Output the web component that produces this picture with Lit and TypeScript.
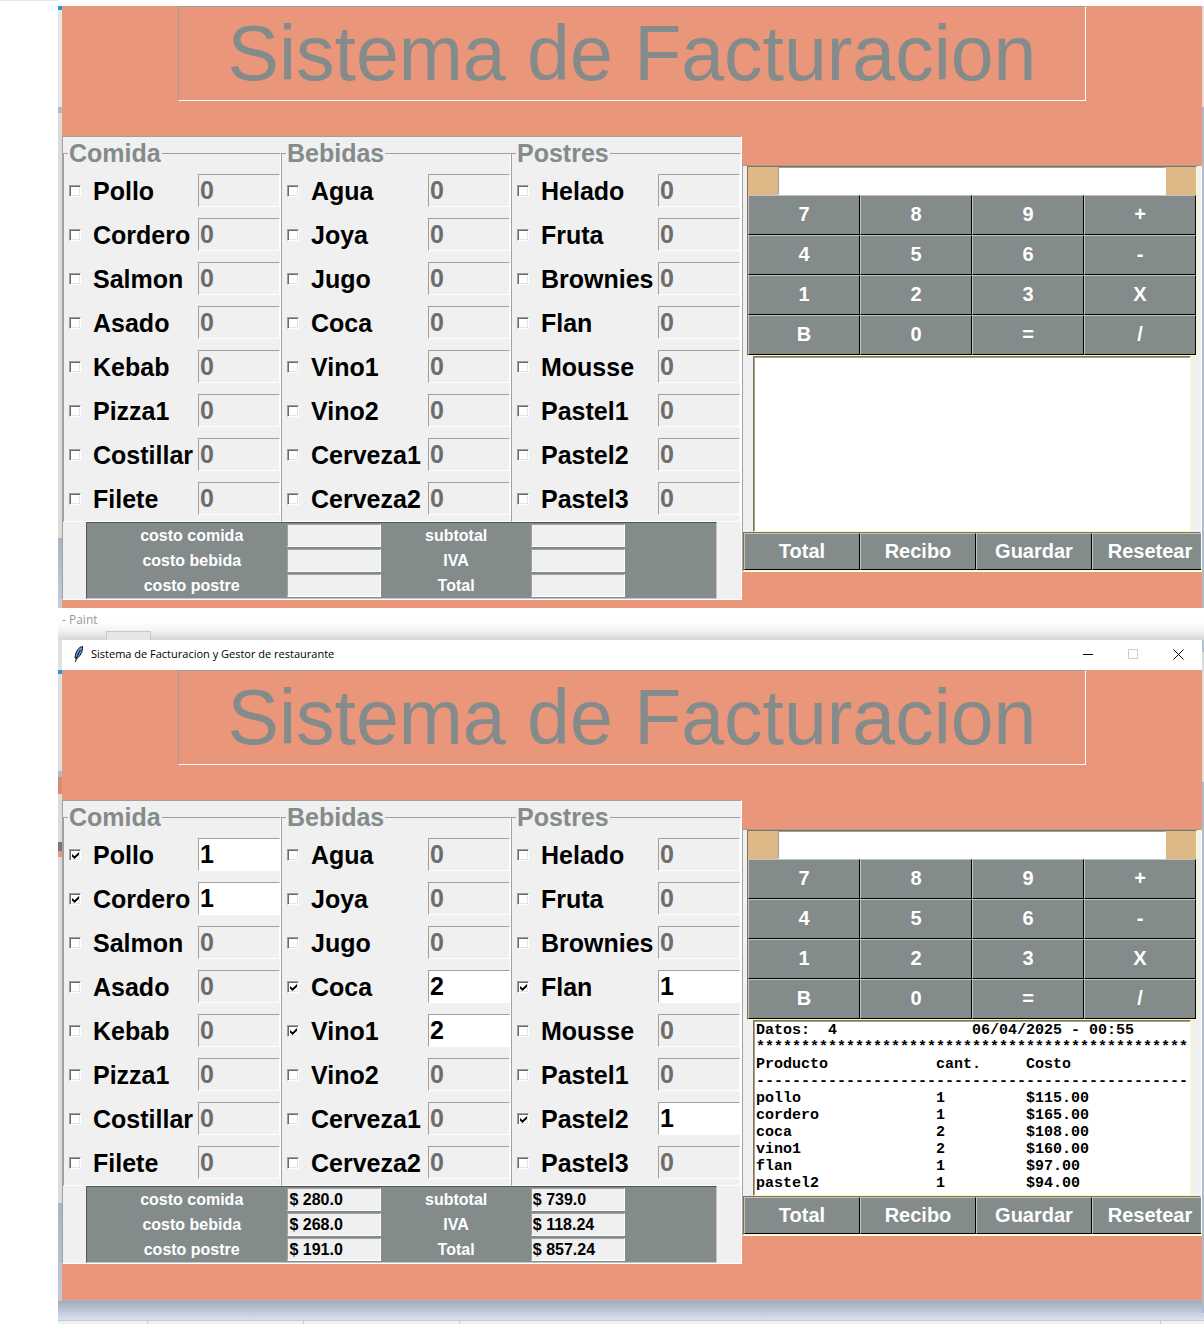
import { LitElement, html, css } from "lit";
import { customElement, property } from "lit/decorators.js";

interface Group {
  name: string;
  items: string[];
}

const GROUPS: Group[] = [
  { name: "Comida", items: ["Pollo", "Cordero", "Salmon", "Asado", "Kebab", "Pizza1", "Costillar", "Filete"] },
  { name: "Bebidas", items: ["Agua", "Joya", "Jugo", "Coca", "Vino1", "Vino2", "Cerveza1", "Cerveza2"] },
  { name: "Postres", items: ["Helado", "Fruta", "Brownies", "Flan", "Mousse", "Pastel1", "Pastel2", "Pastel3"] },
];

const COSTS = ["costo comida", "subtotal", "costo bebida", "IVA", "costo postre", "Total"];
const KEYS = ["7", "8", "9", "+", "4", "5", "6", "-", "1", "2", "3", "X", "B", "0", "=", "/"];
const ACTIONS = ["Total", "Recibo", "Guardar", "Resetear"];

const line = (name: string, qty: string, cost: string) => name.padEnd(20) + qty.padEnd(10) + cost;

const RECEIPT = [
  "Datos:  4".padEnd(24) + "06/04/2025 - 00:55",
  "*".repeat(48),
  line("Producto", "cant.", "Costo"),
  "-".repeat(48),
  line("pollo", "1", "$115.00"),
  line("cordero", "1", "$165.00"),
  line("coca", "2", "$108.00"),
  line("vino1", "2", "$160.00"),
  line("flan", "1", "$97.00"),
  line("pastel2", "1", "$94.00"),
].join("\n");

@customElement("billing-app")
export class BillingApp extends LitElement {
  @property({ attribute: false }) order: Record<string, number> = {};
  @property({ attribute: false }) costs: string[] = [];
  @property() receipt = "";

  static styles = css`
    :host {
      display: block;
      background: #e9967a;
      font-family: "Liberation Sans", Arial, sans-serif;
      overflow: hidden;
    }
    * {
      box-sizing: border-box;
    }
    input,
    button,
    textarea {
      margin: 0;
      border-radius: 0;
      outline: none;
      font: inherit;
    }
    .title {
      margin: 0 116px 35px;
      border: 1px solid;
      border-color: #a0a0a0 #fff #fff #a0a0a0;
      color: #838b8b;
      font-size: 77px;
      font-weight: 400;
      line-height: 93px;
      text-align: center;
      white-space: nowrap;
    }
    .body {
      display: grid;
      grid-template-columns: minmax(0, 680fr) minmax(0, 460fr);
      align-items: start;
    }
    .menu {
      background: #f0f0f0;
      border: 1px solid;
      border-color: #a0a0a0 #fff #fff #a0a0a0;
      font-weight: 700;
    }
    .groups {
      display: grid;
      grid-template-columns: minmax(0, 218fr) minmax(0, 230fr) minmax(0, 230fr);
      font-size: 25px;
    }
    .group {
      min-width: 0;
      margin: 0;
      padding: 0 0 0 5px;
      border: 1px solid;
      border-color: #a0a0a0 #fff #fff #a0a0a0;
    }
    .legend {
      padding: 0 1px;
      margin-left: -1px;
      color: #838b8b;
      line-height: 32px;
    }
    .row {
      display: flex;
      align-items: center;
      height: 44px;
    }
    .check {
      appearance: none;
      flex: none;
      width: 12px;
      height: 12px;
      margin-right: 12px;
      background: #fff;
      border: 1px solid;
      border-color: #a0a0a0 #fff #fff #a0a0a0;
      box-shadow: inset 1px 1px 0 #696969, inset -1px -1px 0 #e3e3e3;
    }
    .check:checked::before {
      content: "";
      display: block;
      width: 7px;
      height: 7px;
      margin: 2px;
      background: #000;
      clip-path: polygon(0 28%, 36% 62%, 100% 0, 100% 40%, 36% 100%, 0 66%);
    }
    .name {
      flex: 1;
      min-width: 0;
      white-space: nowrap;
    }
    .qty {
      flex: none;
      width: 82px;
      height: 33px;
      margin-bottom: 1px;
      padding: 0 1px;
      background: #fff;
      color: #000;
      border: 1px solid;
      border-color: #a0a0a0 #fff #fff #a0a0a0;
    }
    .qty:disabled {
      background: #f0f0f0;
      color: #6d6d6d;
    }
    .costs {
      display: grid;
      grid-template-columns: minmax(0, 191fr) 94px minmax(0, 149fr) 94px minmax(0, 91fr);
      grid-auto-rows: 25px;
      align-items: center;
      margin: 0 24px 0 23px;
      padding-left: 9px;
      background: #838b8b;
      border: 1px solid;
      border-color: #4f5353 #c1c5c5 #c1c5c5 #4f5353;
      color: #fff;
      font-size: 16px;
    }
    .cost-label {
      text-align: center;
    }
    .cost-label:nth-of-type(odd) {
      grid-column: 1;
    }
    .cost {
      width: 100%;
      height: 23px;
      padding: 0 1px;
      background: #f0f0f0;
      color: #000;
      border: 1px solid;
      border-color: #a0a0a0 #fff #fff #a0a0a0;
    }
    .side {
      margin-top: 29px;
      background: #f0f0f0;
      border: 1px solid;
      border-color: #a0a0a0 #fff #fff #a0a0a0;
      overflow: hidden;
      font-size: 20px;
      font-weight: 700;
    }
    .calc {
      margin: 0 4px;
      background: #deb887;
      border: 1px solid;
      border-color: #857050 #ffffb0 #ffffb0 #857050;
    }
    .display {
      display: block;
      width: calc(100% - 60px);
      height: 28px;
      margin: 0 30px;
      background: #fff;
      border: 1px solid;
      border-color: #a0a0a0 #fff #fff #a0a0a0;
    }
    .keys {
      display: grid;
      grid-template-columns: repeat(4, minmax(0, 1fr));
      grid-auto-rows: 40px;
    }
    .key {
      padding: 0;
      background: #838b8b;
      color: #fff;
      border: 1px solid;
      border-color: #c1c5c5 #000 #000 #c1c5c5;
      font-weight: 700;
    }
    .keys .key {
      padding-bottom: 2px;
    }
    .receipt {
      display: block;
      width: calc(100% - 20px);
      height: 176px;
      margin: 0 10px;
      padding: 1px 0 0 2px;
      background: #fff;
      color: #000;
      border: 1px solid;
      border-color: #857050 #ffffb0 #ffffb0 #857050;
      box-shadow: inset 1px 1px 0 #a0a0a0;
      resize: none;
      overflow: hidden;
      white-space: pre;
      font: 700 15px/17px "Liberation Mono", "Courier New", monospace;
    }
    .actions {
      display: grid;
      grid-template-columns: repeat(4, 116px);
      grid-auto-rows: 37px;
      border: 1px solid;
      border-color: #857050 #ffffb0 #ffffb0 #857050;
    }
  `;

  render() {
    return html`
      <h1 class="title">Sistema de Facturacion</h1>
      <div class="body">
        <section class="menu">
          <div class="groups">
            ${GROUPS.map(
              (g) => html`<fieldset class="group">
                <legend class="legend">${g.name}</legend>
                ${g.items.map((item) => {
                  const qty = this.order[item];
                  return html`<div class="row">
                    <input class="check" type="checkbox" id="c-${item}" .checked=${!!qty} />
                    <label class="name" for="c-${item}">${item}</label>
                    <input class="qty" aria-label="Cantidad ${item}" .value=${String(qty ?? 0)} ?disabled=${!qty} />
                  </div>`;
                })}
              </fieldset>`
            )}
          </div>
          <div class="costs">
            ${COSTS.map(
              (c, i) => html`<label class="cost-label" for="t-${i}">${c}</label>
                <input class="cost" id="t-${i}" readonly .value=${this.costs[i] ?? ""} />`
            )}
          </div>
        </section>
        <section class="side">
          <div class="calc">
            <input class="display" aria-label="Calculadora" />
            <div class="keys">${KEYS.map((k) => html`<button class="key">${k}</button>`)}</div>
          </div>
          <textarea class="receipt" aria-label="Recibo" .value=${this.receipt}></textarea>
          <div class="actions">${ACTIONS.map((a) => html`<button class="key">${a}</button>`)}</div>
        </section>
      </div>
    `;
  }
}

@customElement("app-root")
export class AppRoot extends LitElement {
  static styles = css`
    :host {
      display: block;
      background: linear-gradient(#dbe7f3, #dbe7f3) 0 0 / 62px 1px no-repeat #fff;
    }
    * {
      box-sizing: border-box;
    }
    .desktop {
      margin-left: 58px;
      overflow: hidden;
    }
    .upper {
      padding: 6px 2px 0 4px;
      background:
        linear-gradient(#fff 6px, #dcdcdc 6px 107px, #adb9cd 107px) right / 2px 100% no-repeat,
        linear-gradient(#fff 6px, #1c9ad6 6px 10px, #e6e6e6 10px 107px, #adb9cd 107px 113px, #dcdcdc 113px 538px, #a9b4c6 538px, #c3cddc) left / 4px 100% no-repeat;
    }
    .first {
      padding-bottom: 8px;
    }
    .paint {
      display: flex;
      height: 32px;
      padding-left: 4px;
      gap: 8px;
      background: linear-gradient(#fff 14px, #f4f4f4 22px, #d6d6d6);
      color: #999;
      font: 12px/24px "Open Sans", sans-serif;
    }
    .tab {
      align-self: flex-end;
      width: 45px;
      height: 9px;
      border: 1px solid #c8c8c8;
      border-bottom: 0;
      background: #e4e6e8;
    }
    .lower {
      padding: 0 2px 0 4px;
      background:
        linear-gradient(#dcdcdc 130px, #adb9cd 130px) right / 2px 661px no-repeat,
        linear-gradient(#e2e2e2 30px, #1c9ad6 30px 34px, #dedede 34px 131px, #adb9cd 131px 137px, #d98a70 137px 154px, #dcdcdc 154px 202px, #737a7a 202px 211px, #e9967a 211px 217px, #dcdcdc 217px 563px, #a9b4c6 563px, #c0cada 661px) left top / 4px 661px no-repeat,
        linear-gradient(#b9c0cf 660px, #a4abba 661px, #d8e2ee 680px);
    }
    .bar {
      display: flex;
      align-items: center;
      height: 30px;
      padding: 0 18px 2px 9px;
      background: #fff;
      color: #000;
      font: 11px/28px "Open Sans", sans-serif;
    }
    .feather {
      width: 14px;
      height: 18px;
      margin-right: 6px;
    }
    .caption {
      flex: 1;
    }
    .controls {
      display: flex;
      gap: 34px;
    }
    .control {
      display: grid;
      padding: 0;
      border: 0;
      background: none;
    }
    .second {
      padding-bottom: 36px;
    }
    .status {
      display: grid;
      grid-template-columns: 86px 156px 156px 1fr 43px;
      height: 4px;
      margin: 20px -2px 0 -4px;
      padding-left: 4px;
      border-top: 1px solid #ccc;
      background: #f0f0f0;
    }
    .pane {
      border-right: 1px solid #ccc;
    }
  `;

  render() {
    return html`
      <main class="desktop">
        <div class="upper"><billing-app class="first"></billing-app></div>
        <div class="paint"><span>- Paint</span><span class="tab"></span></div>
        <div class="lower">
          <header class="bar">
            <svg class="feather" viewBox="0 0 14 18" aria-hidden="true">
              <path d="M11.500 1.500C8 2 4.500 6 4 13l2 .5C9 11 12 7 11.500 1.500z" fill="#5b97dd" stroke="#111" />
              <path d="M9.500 5C7 9 5.500 12 4.500 17" fill="none" stroke="#111" />
            </svg>
            <span class="caption">Sistema de Facturacion y Gestor de restaurante</span>
            <div class="controls">
              ${[
                ["Minimizar", "M0 5.500h10", "#000"],
                ["Maximizar", "M.5.5h9v9h-9z", "#ccc"],
                ["Cerrar", "M.5.5l10 10M10.500.5l-10 10", "#000"],
              ].map(
                ([name, d, color]) => html`<button class="control" aria-label=${name}>
                  <svg width="11" height="11" viewBox="0 0 11 11"><path d=${d} fill="none" stroke=${color} /></svg>
                </button>`
              )}
            </div>
          </header>
          <billing-app
            class="second"
            .order=${{ Pollo: 1, Cordero: 1, Coca: 2, Vino1: 2, Flan: 1, Pastel2: 1 }}
            .costs=${["$ 280.0", "$ 739.0", "$ 268.0", "$ 118.24", "$ 191.0", "$ 857.24"]}
            .receipt=${RECEIPT}
          ></billing-app>
          <footer class="status">${[1, 2, 3, 4].map(() => html`<span class="pane"></span>`)}</footer>
        </div>
      </main>
    `;
  }
}
